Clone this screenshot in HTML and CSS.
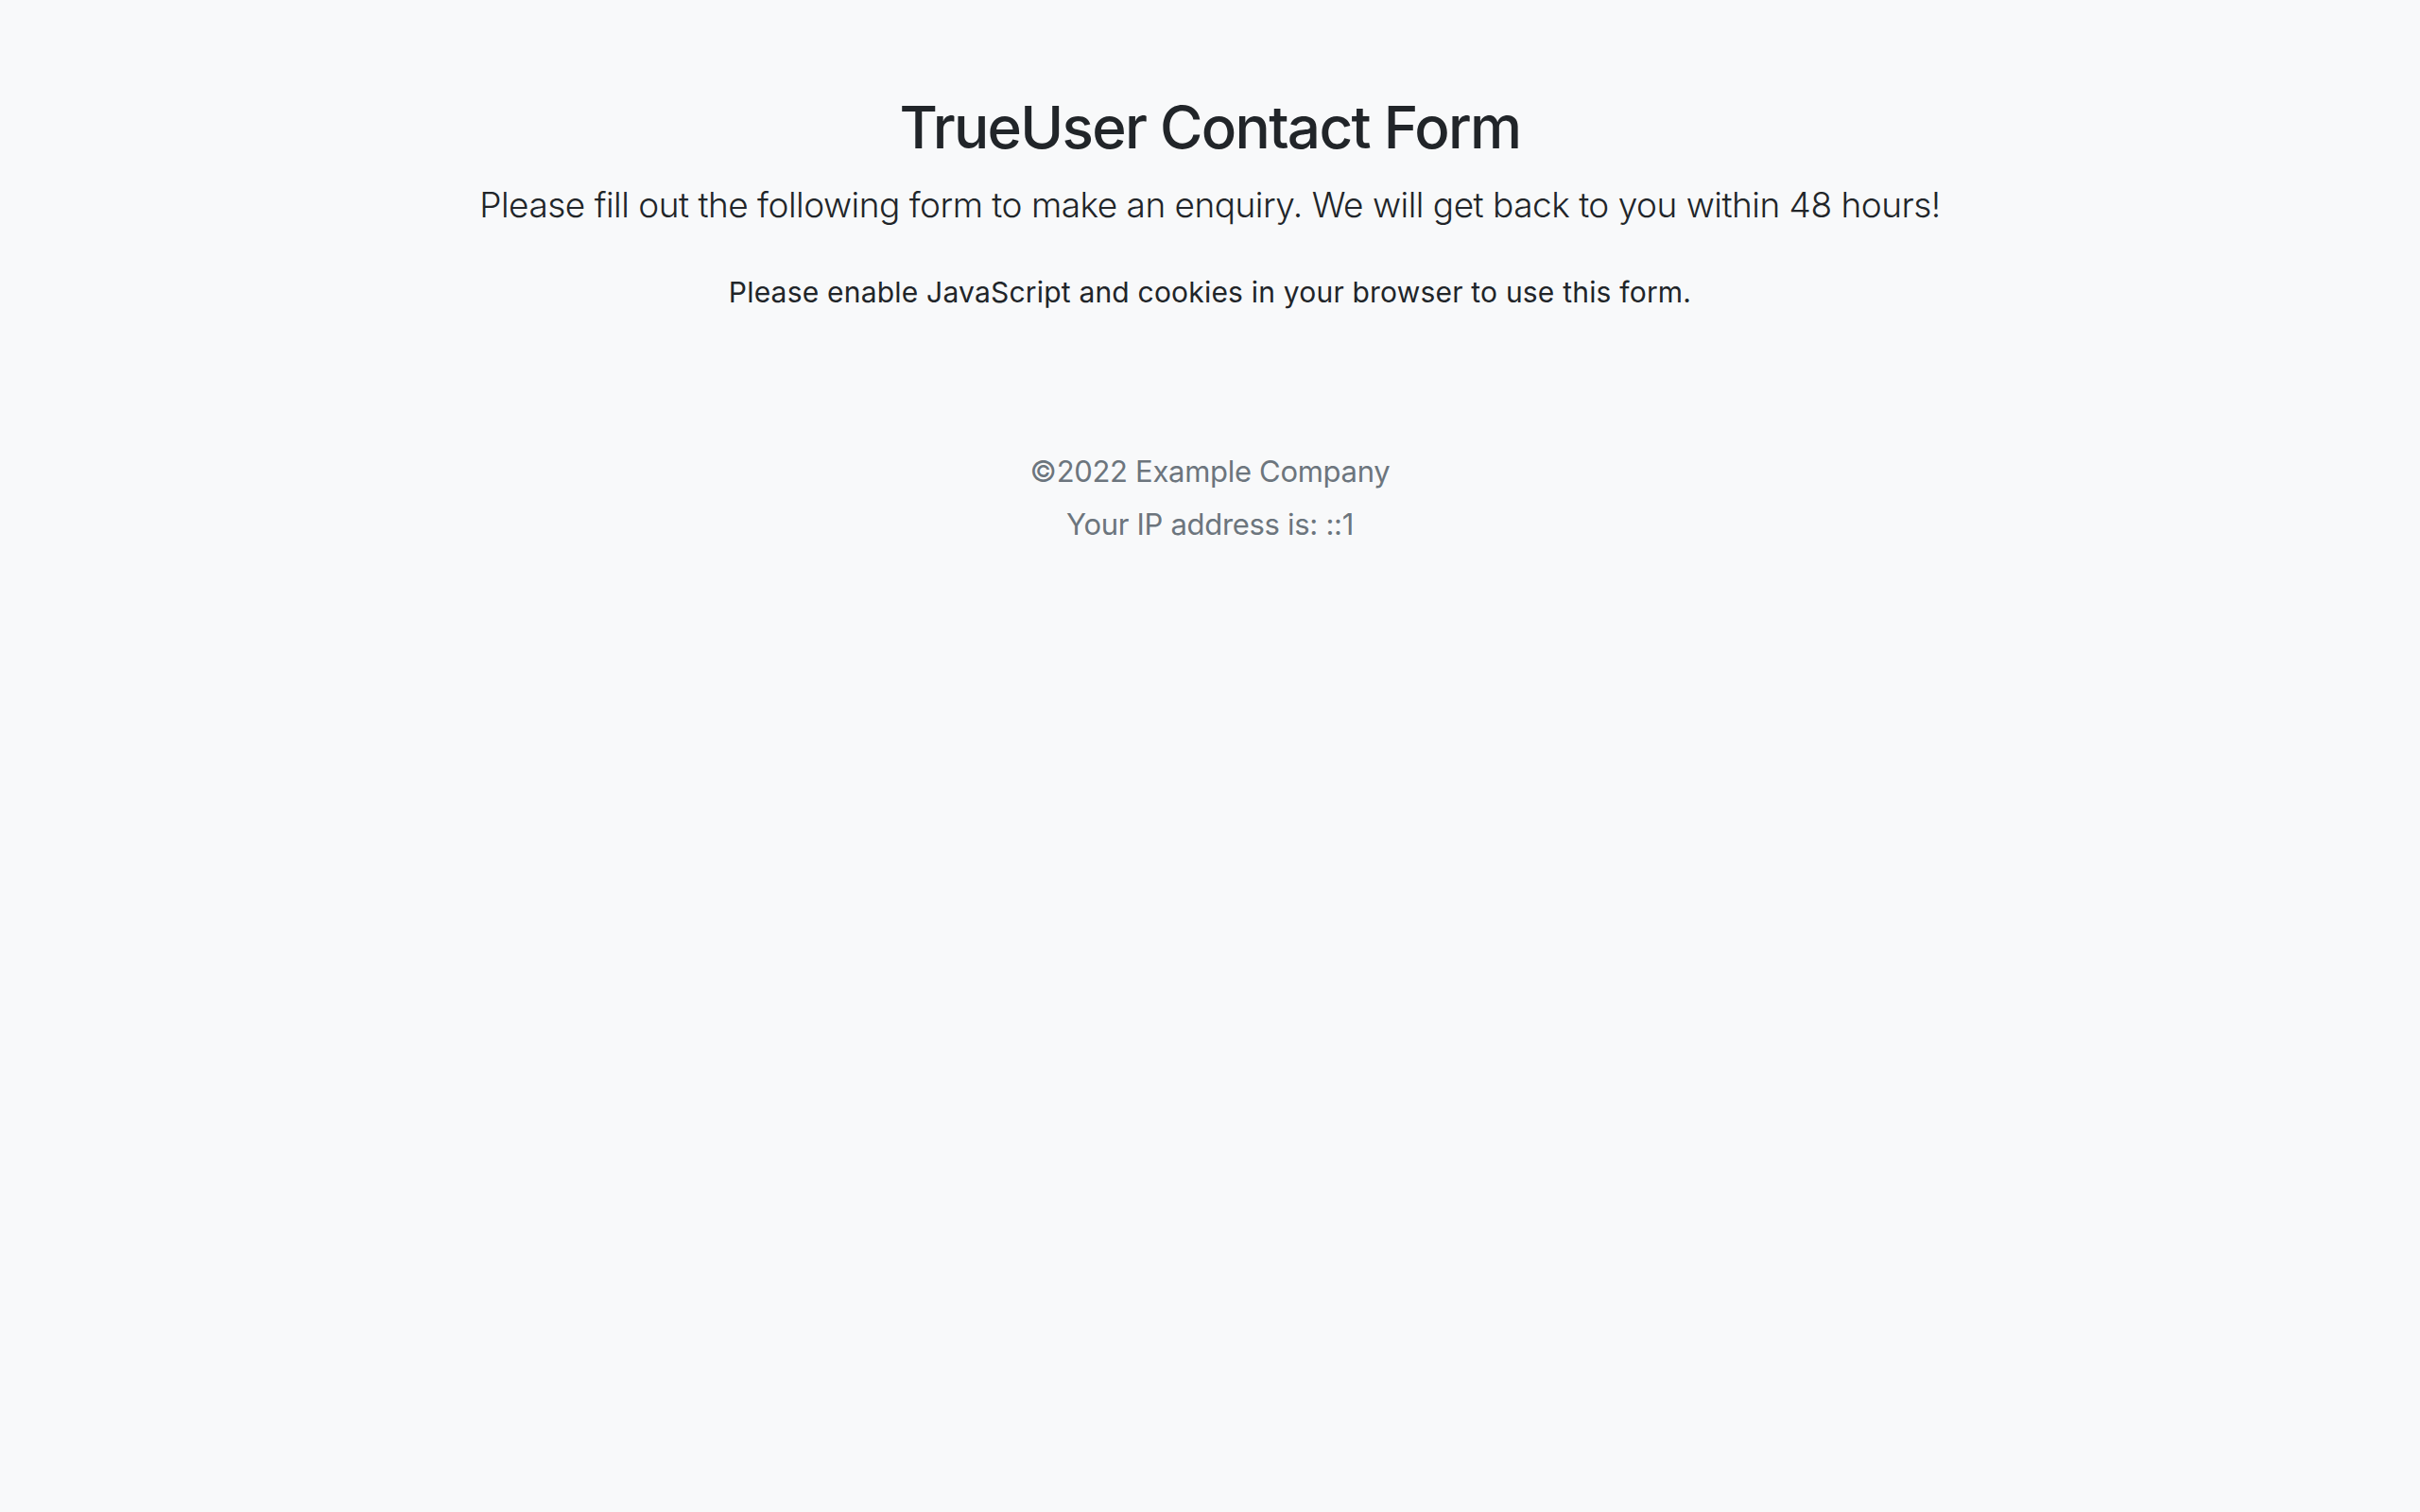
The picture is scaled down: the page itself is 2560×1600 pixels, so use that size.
FILE: index.html
```html
<!DOCTYPE html>
<html lang="en">
<head>
<meta charset="utf-8">
<title>TrueUser Contact Form</title>
<link rel="stylesheet" href="styles.css">
</head>
<body>
<main class="page">
  <header class="intro">
    <h2 class="title">TrueUser Contact Form</h2>
    <p class="lead">Please fill out the following form to make an enquiry. We will get back to you within 48 hours!</p>
  </header>
  <p class="notice">Please enable JavaScript and cookies in your browser to use this form.</p>
  <footer class="footer">
    <p class="footer-line">©2022 Example Company</p>
    <p class="footer-line">Your IP address is: ::1</p>
  </footer>
</main>
</body>
</html>
```

FILE: styles.css
```css
html, body {
  margin: 0;
  padding: 0;
  background: #f8f9fa;
}
body {
  font-family: Inter, "Noto Sans", "Liberation Sans", sans-serif;
  color: #212529;
  min-height: 1600px;
}
.page {
  display: flex;
  flex-direction: column;
  align-items: center;
  padding-top: 96px;
  text-align: center;
}
.intro {
  display: flex;
  flex-direction: column;
  align-items: center;
}
.title {
  margin: 0;
  font-size: 62px;
  line-height: 77px;
  font-weight: 500;
  color: #212529;
  letter-spacing: -1.7px;
}
.lead {
  margin: 14px 0 0;
  font-size: 37px;
  line-height: 60px;
  font-weight: 300;
  color: #212529;
  letter-spacing: -0.5px;
}
.notice {
  margin: 38px 0 0;
  font-size: 30px;
  line-height: 48px;
  font-weight: 400;
  letter-spacing: 0.2px;
}
.footer {
  margin-top: 142px;
  display: flex;
  flex-direction: column;
  align-items: center;
  gap: 8px;
  color: #6c757d;
}
.footer-line {
  margin: 0;
  font-size: 31px;
  line-height: 48px;
  letter-spacing: -0.3px;
}
```
